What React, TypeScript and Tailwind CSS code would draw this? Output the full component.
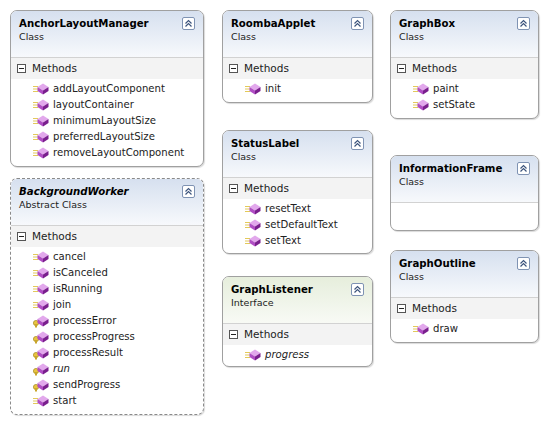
import React from "react";

type M = { n: string; p?: boolean; i?: boolean };
type B = {
  title: string; kind: string; x: number; y: number; w: number; h: number;
  methods?: M[]; dashed?: boolean; italic?: boolean; green?: boolean;
};

const boxes: B[] = [
  { title: "AnchorLayoutManager", kind: "Class", x: 10, y: 10, w: 194, h: 157,
    methods: ["addLayoutComponent", "layoutContainer", "minimumLayoutSize", "preferredLayoutSize", "removeLayoutComponent"].map((n) => ({ n })) },
  { title: "BackgroundWorker", kind: "Abstract Class", x: 10, y: 178, w: 194, h: 237, dashed: true, italic: true,
    methods: [
      { n: "cancel" }, { n: "isCanceled" }, { n: "isRunning" }, { n: "join" },
      { n: "processError", p: true }, { n: "processProgress", p: true }, { n: "processResult", p: true },
      { n: "run", p: true, i: true }, { n: "sendProgress", p: true }, { n: "start" },
    ] },
  { title: "RoombaApplet", kind: "Class", x: 222, y: 10, w: 151, h: 93, methods: [{ n: "init" }] },
  { title: "StatusLabel", kind: "Class", x: 222, y: 130, w: 151, h: 124,
    methods: ["resetText", "setDefaultText", "setText"].map((n) => ({ n })) },
  { title: "GraphListener", kind: "Interface", x: 222, y: 276, w: 151, h: 91, green: true,
    methods: [{ n: "progress", i: true }] },
  { title: "GraphBox", kind: "Class", x: 390, y: 10, w: 149, h: 109,
    methods: [{ n: "paint" }, { n: "setState" }] },
  { title: "InformationFrame", kind: "Class", x: 390, y: 155, w: 149, h: 76 },
  { title: "GraphOutline", kind: "Class", x: 390, y: 250, w: 149, h: 93, methods: [{ n: "draw" }] },
];

function MethodIcon({ p }: { p?: boolean }) {
  return (
    <svg width="18" height="14" viewBox="0 0 18 14" className="shrink-0">
      {p ? (
        <g>
          <circle cx="4" cy="9" r="2.6" fill="#e8c440" stroke="#a88a20" strokeWidth="0.7" />
          <rect x="3" y="10" width="2" height="3.5" fill="#c9a62c" />
        </g>
      ) : (
        <g stroke="#e3c95a" strokeWidth="1">
          <line x1="1" y1="4.5" x2="6" y2="4.5" />
          <line x1="1" y1="7" x2="6" y2="7" />
          <line x1="1" y1="9.5" x2="6" y2="9.5" />
        </g>
      )}
      <polygon points="11,1.5 16.5,5 11,8.5 5.5,5" fill="#e2a8ec" />
      <polygon points="5.5,5 11,8.5 11,12.5 5.5,9" fill="#b04ec4" />
      <polygon points="16.5,5 11,8.5 11,12.5 16.5,9" fill="#7a1f8e" />
    </svg>
  );
}

function Collapse() {
  return (
    <div className="w-[13px] h-[13px] border border-[#7f93b3] bg-white rounded-[2px] flex items-center justify-center">
      <svg width="9" height="9" viewBox="0 0 9 9" fill="none" stroke="#3d557d" strokeWidth="1.2">
        <path d="M1.5 4.5 L4.5 1.5 L7.5 4.5" />
        <path d="M1.5 7.5 L4.5 4.5 L7.5 7.5" />
      </svg>
    </div>
  );
}

function Box({ b }: { b: B }) {
  return (
    <div
      className={`absolute rounded-[7px] bg-white overflow-hidden flex flex-col shadow-[1px_1px_1px_rgba(0,0,0,0.15)] ${b.dashed ? "border border-dashed border-[#8a8a8a]" : "border border-[#a0a0a0]"}`}
      style={{ left: b.x, top: b.y, width: b.w, height: b.h }}
    >
      <div className={`h-[46px] px-[8px] pt-[6px] flex justify-between ${b.green ? "bg-gradient-to-b from-[#e6eedc] to-[#f8faf5]" : "bg-gradient-to-b from-[#d6e0ef] to-[#f7f9fc]"}`}>
        <div>
          <div className={`font-bold text-[10.2px] leading-[13px] text-black ${b.italic ? "italic" : ""}`}>{b.title}</div>
          <div className="text-[9.5px] leading-[13px] text-[#222]">{b.kind}</div>
        </div>
        <Collapse />
      </div>
      {b.methods && (
        <>
          <div className="h-[22px] border-t border-[#d2d2d2] bg-[#f3f3f3] flex items-center pl-[6px] gap-[6px]">
            <div className="w-[9px] h-[9px] border border-[#555] bg-white flex items-center justify-center">
              <div className="w-[5px] h-px bg-[#222]" />
            </div>
            <span className="text-[10.5px] text-[#222]">Methods</span>
          </div>
          <div className="pt-[2px] pl-[21px] flex flex-col">
            {b.methods.map((m) => (
              <div key={m.n} className="h-[16px] flex items-center gap-[3px]">
                <MethodIcon p={m.p} />
                <span className={`text-[10.1px] text-[#222] ${m.i ? "italic" : ""}`}>{m.n}</span>
              </div>
            ))}
          </div>
        </>
      )}
      {!b.methods && <div className="flex-1 border-t border-[#d2d2d2]" />}
    </div>
  );
}

export default function App() {
  return (
    <div className="relative w-[547px] h-[423px] bg-white" style={{ fontFamily: '"DejaVu Sans", Verdana, sans-serif' }}>
      {boxes.map((b) => (
        <Box key={b.title} b={b} />
      ))}
    </div>
  );
}
